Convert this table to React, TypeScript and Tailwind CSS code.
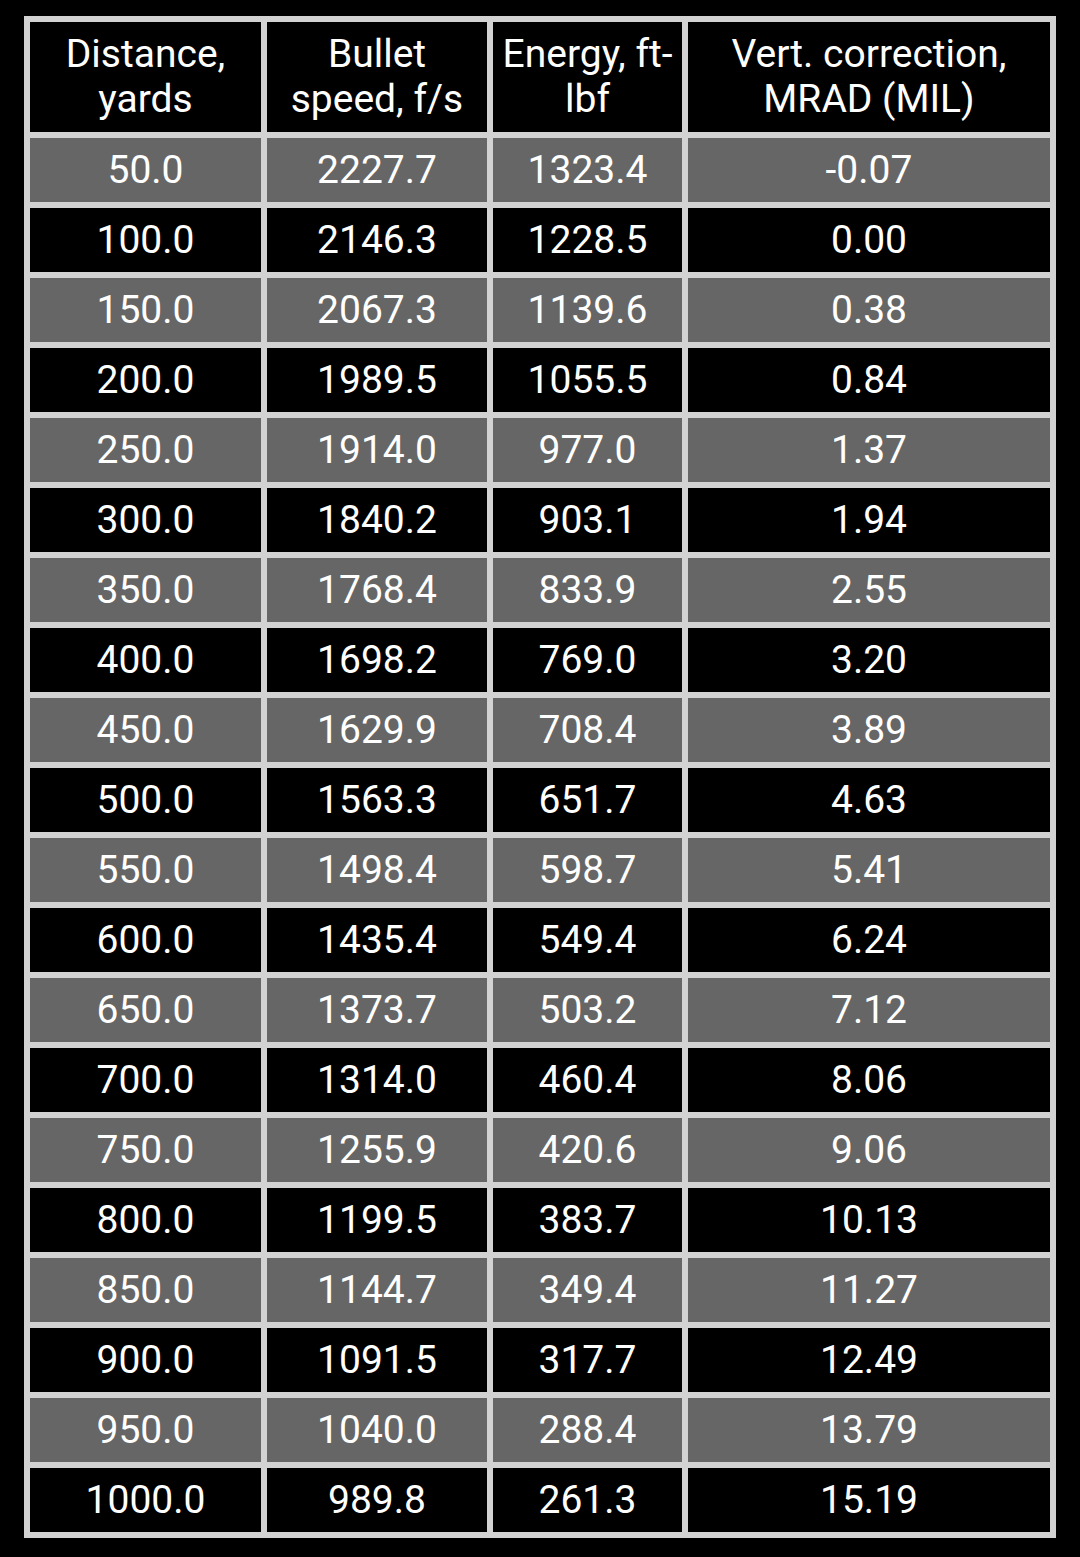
import React from "react";

const rows: [string, string, string, string][] = [
  ["50.0", "2227.7", "1323.4", "-0.07"],
  ["100.0", "2146.3", "1228.5", "0.00"],
  ["150.0", "2067.3", "1139.6", "0.38"],
  ["200.0", "1989.5", "1055.5", "0.84"],
  ["250.0", "1914.0", "977.0", "1.37"],
  ["300.0", "1840.2", "903.1", "1.94"],
  ["350.0", "1768.4", "833.9", "2.55"],
  ["400.0", "1698.2", "769.0", "3.20"],
  ["450.0", "1629.9", "708.4", "3.89"],
  ["500.0", "1563.3", "651.7", "4.63"],
  ["550.0", "1498.4", "598.7", "5.41"],
  ["600.0", "1435.4", "549.4", "6.24"],
  ["650.0", "1373.7", "503.2", "7.12"],
  ["700.0", "1314.0", "460.4", "8.06"],
  ["750.0", "1255.9", "420.6", "9.06"],
  ["800.0", "1199.5", "383.7", "10.13"],
  ["850.0", "1144.7", "349.4", "11.27"],
  ["900.0", "1091.5", "317.7", "12.49"],
  ["950.0", "1040.0", "288.4", "13.79"],
  ["1000.0", "989.8", "261.3", "15.19"],
];

const headers: string[][] = [
  ["Distance,", "yards"],
  ["Bullet", "speed, f/s"],
  ["Energy, ft-", "lbf"],
  ["Vert. correction,", "MRAD (MIL)"],
];

export default function App() {
  return (
    <div
      className="w-[1080px] h-[1557px] bg-black pt-[16px] pl-[24px] text-white"
      style={{ fontFamily: "Roboto, 'Noto Sans', sans-serif" }}
    >
      <div className="w-[1032px] bg-[#d2d2d2] p-[6px] grid grid-cols-[231px_220px_189px_362px] gap-[6px]">
        {headers.map((h, i) => (
          <div
            key={i}
            className="h-[110px] bg-black flex flex-col items-center justify-center text-[39px] leading-[45px] text-center"
          >
            <span>{h[0]}</span>
            <span>{h[1]}</span>
          </div>
        ))}
        {rows.map((r, ri) =>
          r.map((c, ci) => (
            <div
              key={`${ri}-${ci}`}
              className={`h-[64px] flex items-center justify-center text-[39px] leading-none ${
                ri % 2 === 0 ? "bg-[#666666]" : "bg-black"
              }`}
            >
              {c}
            </div>
          ))
        )}
      </div>
    </div>
  );
}
